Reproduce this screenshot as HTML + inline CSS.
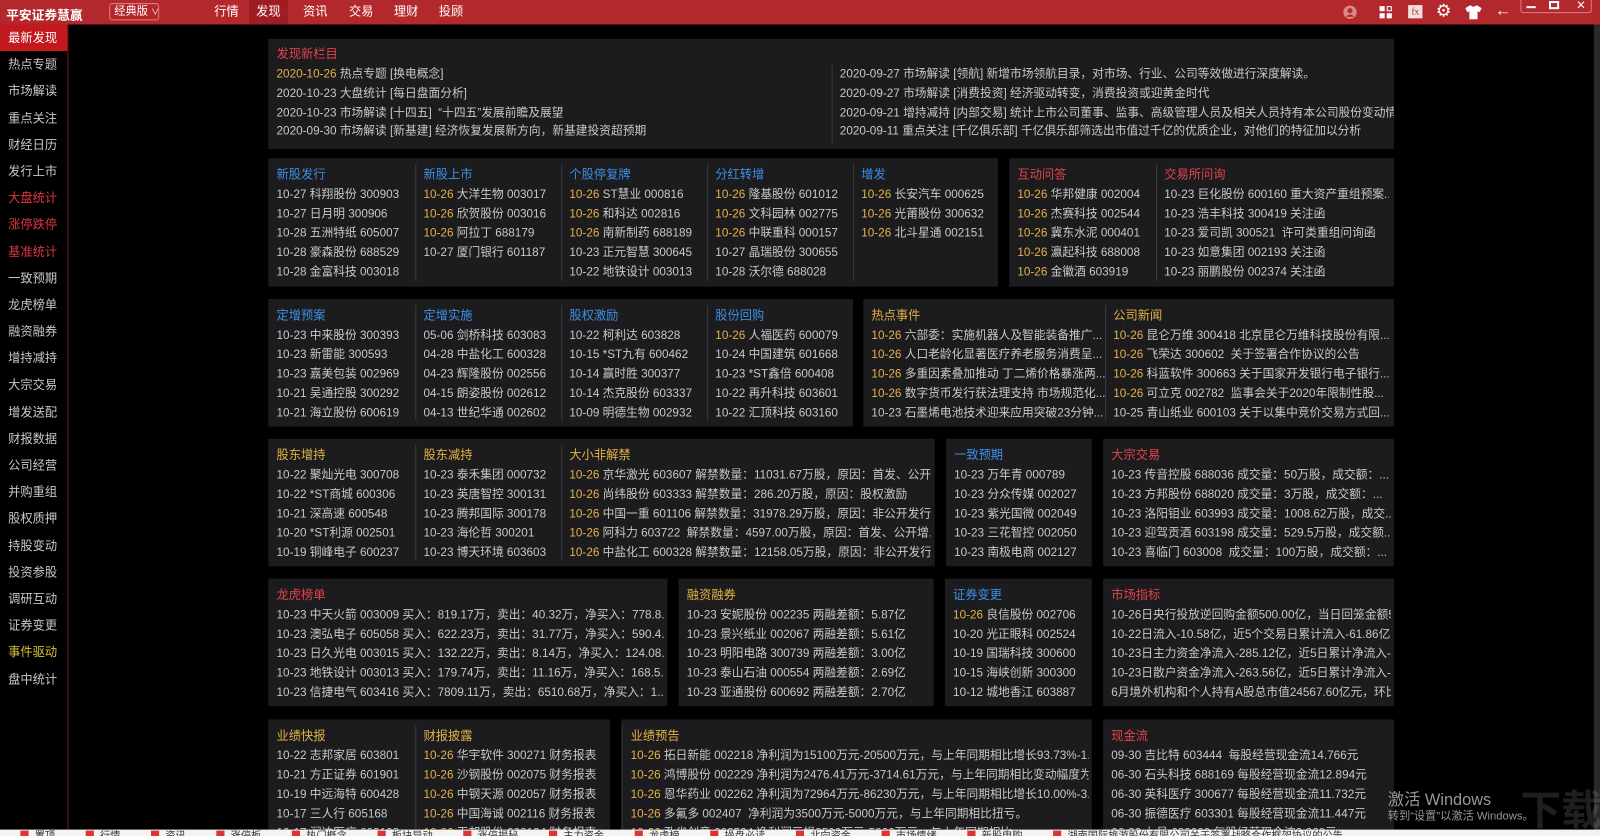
<!DOCTYPE html>
<html style="overflow:hidden;height:836px"><head><meta charset="utf-8"><style>
*{margin:0;padding:0;box-sizing:border-box}
body{width:1600px;height:836px;overflow:hidden;background:#000;font-family:"Liberation Sans","Noto Sans CJK SC",sans-serif;color:#c9c9c9;font-size:11.5px;position:relative}
#w{position:absolute;left:0;top:0;width:1568px;height:820px;transform:scale(1.0204);transform-origin:0 0;overflow:hidden}
#top{position:absolute;left:0;top:0;width:1568px;height:24px;background:#b3282d}
#logo{position:absolute;left:6px;top:4px;color:#fff;font-weight:bold;font-size:12.5px}
#ver{position:absolute;left:107px;top:3px;width:49px;height:17px;border:1px solid #e07a7d;border-radius:3px;color:#fff;font-size:11px;line-height:15px;padding-left:4px;white-space:nowrap}
.tab{position:absolute;top:0;height:24px;line-height:23px;color:#fff;font-size:12px;text-align:center;width:38px}
#side{position:absolute;left:0;top:24px;width:67px;height:790px;border-right:1px solid #7a1518}
.si{height:26.2px;line-height:26px;padding-left:8px;font-size:12px;color:#c8c8c8}
.p{position:absolute;background:#1c1c1f;overflow:hidden}
.c{position:absolute;top:6px;padding-left:8px;white-space:nowrap;overflow:hidden;line-height:19px}
.c.s{border-left:1px solid #3c3c3e;padding-left:7px}
.t{font-size:12px;line-height:22px;margin-top:-1px}
.b{color:#3d8fe4}.r{color:#e2434c}.g{color:#e0b245}
i{font-style:normal;color:#e5b24a}
#bot{position:absolute;left:0;top:813px;width:1568px;height:23px;background:#f3f3f3;font-size:10px;color:#333;white-space:nowrap;line-height:14px;padding-left:20px;overflow:hidden}
#bot span{margin-right:30px}
#bot span:before{content:"";display:inline-block;width:8px;height:8px;background:#d33;margin-right:6px}
</style></head><body><div id="w">
<div id="top">
<div id="logo">平安证券慧赢</div>
<div id="ver">经典版 <span style="font-size:8px">∨</span></div>
<div class="tab" style="left:203px">行情</div>
<div class="tab" style="left:244px;background:#9e1d22">发现</div>
<div class="tab" style="left:290px">资讯</div>
<div class="tab" style="left:335px">交易</div>
<div class="tab" style="left:379px">理财</div>
<div class="tab" style="left:423px">投顾</div>
<svg style="position:absolute;left:1316px;top:5px" width="14" height="14"><circle cx="7" cy="7" r="6.5" fill="#d88"/><circle cx="7" cy="5.5" r="2.5" fill="#b3282d"/><path d="M3 11.5Q7 7 11 11.5" fill="#b3282d"/></svg>
<svg style="position:absolute;left:1351px;top:5px" width="14" height="14" fill="#fff"><rect x="1" y="1" width="5" height="5"/><rect x="1" y="8" width="5" height="5"/><rect x="8" y="8" width="5" height="5"/><rect x="8.5" y="1.5" width="4" height="4" fill="none" stroke="#fff"/></svg>
<div style="position:absolute;left:1380px;top:5px;width:14px;height:13px;background:#f3e0e0;color:#b3282d;font-size:9px;line-height:13px;text-align:center;font-family:'Liberation Serif'">fx</div>
<div style="position:absolute;left:1407px;top:1px;color:#fff;font-size:17px">⚙</div>
<svg style="position:absolute;left:1436px;top:5px" width="16" height="14" fill="#fff"><path d="M5 0L0 3 2 7 4 6V14H12V6L14 7 16 3 11 0Q8 3 5 0Z"/></svg>
<div style="position:absolute;left:1465px;top:2px;color:#fff;font-size:16px">←</div>
<div style="position:absolute;left:1490px;top:-1px;width:70px;height:14px;border:1px solid #e08a8c;border-top:none;border-radius:0 0 3px 3px"></div>
<div style="position:absolute;left:1496px;top:6px;width:9px;height:2px;background:#fff"></div>
<div style="position:absolute;left:1518px;top:1px;width:10px;height:8px;border:2px solid #fff"></div>
<div style="position:absolute;left:1545px;top:-3px;color:#fff;font-size:15px">×</div>
</div>
<div id="side">
<div class="si" style="background:#c3181d;color:#fff">最新发现</div>
<div class="si">热点专题</div><div class="si">市场解读</div><div class="si">重点关注</div><div class="si">财经日历</div><div class="si">发行上市</div>
<div class="si" style="color:#e0383f">大盘统计</div><div class="si" style="color:#e0383f">涨停跌停</div><div class="si" style="color:#e0383f">基准统计</div>
<div class="si">一致预期</div><div class="si">龙虎榜单</div><div class="si">融资融券</div><div class="si">增持减持</div><div class="si">大宗交易</div><div class="si">增发送配</div><div class="si">财报数据</div><div class="si">公司经营</div><div class="si">并购重组</div><div class="si">股权质押</div><div class="si">持股变动</div><div class="si">投资参股</div><div class="si">调研互动</div><div class="si">证券变更</div>
<div class="si" style="color:#d8c03a">事件驱动</div><div class="si">盘中统计</div>
</div>
<div style="position:absolute;left:1562px;top:24px;width:6px;height:790px;background:#2a2a2a"></div>

<div class="p" style="left:263px;top:38px;width:1103px;height:108px">
<div class="c" style="left:0;top:5px;width:552px;line-height:18.8px"><div class="t r">发现新栏目</div><div><i>2020-10-26</i> 热点专题 [换电概念]</div><div>2020-10-23 大盘统计 [每日盘面分析]</div><div>2020-10-23 市场解读 [十四五] &nbsp;“十四五”发展前瞻及展望</div><div>2020-09-30 市场解读 [新基建] 经济恢复发展新方向，新基建投资超预期</div></div>
<div class="c s" style="left:552px;top:26px;width:551px;height:78px;line-height:18.8px"><div>2020-09-27 市场解读 [领航] 新增市场领航目录，对市场、行业、公司等效做进行深度解读。</div><div>2020-09-27 市场解读 [消费投资] 经济驱动转变，消费投资或迎黄金时代</div><div>2020-09-21 增持减持 [内部交易] 统计上市公司董事、监事、高级管理人员及相关人员持有本公司股份变动情况</div><div>2020-09-11 重点关注 [千亿俱乐部] 千亿俱乐部筛选出市值过千亿的优质企业，对他们的特征加以分析</div></div>
</div>

<div class="p" style="left:263px;top:155px;width:715px;height:126px">
<div class="c" style="left:0;width:144px"><div class="t b">新股发行</div><div>10-27 科翔股份 300903</div><div>10-27 日月明 300906</div><div>10-28 五洲特纸 605007</div><div>10-28 豪森股份 688529</div><div>10-28 金富科技 003018</div></div>
<div class="c s" style="left:144px;width:143px;height:114px"><div class="t b">新股上市</div><div><i>10-26</i> 大洋生物 003017</div><div><i>10-26</i> 欣贺股份 003016</div><div><i>10-26</i> 阿拉丁 688179</div><div>10-27 厦门银行 601187</div></div>
<div class="c s" style="left:287px;width:143px;height:114px"><div class="t b">个股停复牌</div><div><i>10-26</i> ST慧业 000816</div><div><i>10-26</i> 和科达 002816</div><div><i>10-26</i> 南新制药 688189</div><div>10-23 正元智慧 300645</div><div>10-22 地铁设计 003013</div></div>
<div class="c s" style="left:430px;width:143px;height:114px"><div class="t b">分红转增</div><div><i>10-26</i> 隆基股份 601012</div><div><i>10-26</i> 文科园林 002775</div><div><i>10-26</i> 中联重科 000157</div><div>10-27 晶瑞股份 300655</div><div>10-28 沃尔德 688028</div></div>
<div class="c s" style="left:573px;width:142px;height:114px"><div class="t b">增发</div><div><i>10-26</i> 长安汽车 000625</div><div><i>10-26</i> 光莆股份 300632</div><div><i>10-26</i> 北斗星通 002151</div></div>
</div>
<div class="p" style="left:989px;top:155px;width:377px;height:126px">
<div class="c" style="left:0;width:144px"><div class="t r">互动问答</div><div><i>10-26</i> 华邦健康 002004</div><div><i>10-26</i> 杰赛科技 002544</div><div><i>10-26</i> 冀东水泥 000401</div><div><i>10-26</i> 瀛起科技 688008</div><div><i>10-26</i> 金徽酒 603919</div></div>
<div class="c s" style="left:144px;width:228px;height:114px"><div class="t r">交易所问询</div><div>10-23 巨化股份 600160 重大资产重组预案..</div><div>10-23 浩丰科技 300419 关注函</div><div>10-23 爱司凯 300521 &nbsp;许可类重组问询函</div><div>10-23 如意集团 002193 关注函</div><div>10-23 丽鹏股份 002374 关注函</div></div>
</div>

<div class="p" style="left:263px;top:293px;width:573px;height:125px">
<div class="c" style="left:0;width:144px"><div class="t b">定增预案</div><div>10-23 中来股份 300393</div><div>10-23 新雷能 300593</div><div>10-23 嘉美包装 002969</div><div>10-21 吴通控股 300292</div><div>10-21 海立股份 600619</div></div>
<div class="c s" style="left:144px;width:143px;height:113px"><div class="t b">定增实施</div><div>05-06 剑桥科技 603083</div><div>04-28 中盐化工 600328</div><div>04-23 辉隆股份 002556</div><div>04-15 朗姿股份 002612</div><div>04-13 世纪华通 002602</div></div>
<div class="c s" style="left:287px;width:143px;height:113px"><div class="t b">股权激励</div><div>10-22 柯利达 603828</div><div>10-15 *ST九有 600462</div><div>10-14 赢时胜 300377</div><div>10-14 杰克股份 603337</div><div>10-09 明德生物 002932</div></div>
<div class="c s" style="left:430px;width:143px;height:113px"><div class="t b">股份回购</div><div><i>10-26</i> 人福医药 600079</div><div>10-24 中国建筑 601668</div><div>10-23 *ST鑫倍 600408</div><div>10-22 再升科技 603601</div><div>10-22 汇顶科技 603160</div></div>
</div>
<div class="p" style="left:846px;top:293px;width:520px;height:125px">
<div class="c" style="left:0;width:237px"><div class="t g">热点事件</div><div><i>10-26</i> 六部委：实施机器人及智能装备推广...</div><div><i>10-26</i> 人口老龄化显著医疗养老服务消费呈...</div><div><i>10-26</i> 多重因素叠加推动 丁二烯价格暴涨两...</div><div><i>10-26</i> 数字货币发行获法理支持 市场规范化...</div><div>10-23 石墨烯电池技术迎来应用突破23分钟...</div></div>
<div class="c s" style="left:237px;width:278px;height:113px"><div class="t g">公司新闻</div><div><i>10-26</i> 昆仑万维 300418 北京昆仑万维科技股份有限...</div><div><i>10-26</i> 飞荣达 300602 &nbsp;关于签署合作协议的公告</div><div><i>10-26</i> 科蓝软件 300663 关于国家开发银行电子银行...</div><div><i>10-26</i> 可立克 002782 &nbsp;监事会关于2020年限制性股...</div><div>10-25 青山纸业 600103 关于以集中竞价交易方式回...</div></div>
</div>

<div class="p" style="left:263px;top:430px;width:653px;height:125px">
<div class="c" style="left:0;width:144px"><div class="t g">股东增持</div><div>10-22 聚灿光电 300708</div><div>10-22 *ST商城 600306</div><div>10-21 深高速 600548</div><div>10-20 *ST利源 002501</div><div>10-19 铜峰电子 600237</div></div>
<div class="c s" style="left:144px;width:143px;height:113px"><div class="t g">股东减持</div><div>10-23 泰禾集团 000732</div><div>10-23 英唐智控 300131</div><div>10-23 腾邦国际 300178</div><div>10-23 海伦哲 300201</div><div>10-23 博天环境 603603</div></div>
<div class="c s" style="left:287px;width:362px;height:113px"><div class="t g">大小非解禁</div><div><i>10-26</i> 京华激光 603607 解禁数量：11031.67万股，原因：首发、公开...</div><div><i>10-26</i> 尚纬股份 603333 解禁数量：286.20万股，原因：股权激励</div><div><i>10-26</i> 中国一重 601106 解禁数量：31978.29万股，原因：非公开发行...</div><div><i>10-26</i> 阿科力 603722 &nbsp;解禁数量：4597.00万股，原因：首发、公开增...</div><div><i>10-26</i> 中盐化工 600328 解禁数量：12158.05万股，原因：非公开发行...</div></div>
</div>
<div class="p" style="left:927px;top:430px;width:143px;height:125px">
<div class="c" style="left:0;width:143px"><div class="t b">一致预期</div><div>10-23 万年青 000789</div><div>10-23 分众传媒 002027</div><div>10-23 紫光国微 002049</div><div>10-23 三花智控 002050</div><div>10-23 南极电商 002127</div></div>
</div>
<div class="p" style="left:1081px;top:430px;width:285px;height:125px">
<div class="c" style="left:0;width:282px"><div class="t r">大宗交易</div><div>10-23 传音控股 688036 成交量：50万股，成交额：...</div><div>10-23 方邦股份 688020 成交量：3万股，成交额：...</div><div>10-23 洛阳钼业 603993 成交量：1008.62万股，成交...</div><div>10-23 迎驾贡酒 603198 成交量：529.5万股，成交额...</div><div>10-23 喜临门 603008 &nbsp;成交量：100万股，成交额：...</div></div>
</div>

<div class="p" style="left:263px;top:567px;width:391px;height:125px">
<div class="c" style="left:0;width:388px"><div class="t r">龙虎榜单</div><div>10-23 中天火箭 003009 买入：819.17万，卖出：40.32万，净买入：778.8...</div><div>10-23 澳弘电子 605058 买入：622.23万，卖出：31.77万，净买入：590.4...</div><div>10-23 日久光电 003015 买入：132.22万，卖出：8.14万，净买入：124.08...</div><div>10-23 地铁设计 003013 买入：179.74万，卖出：11.16万，净买入：168.5...</div><div>10-23 信捷电气 603416 买入：7809.11万，卖出：6510.68万，净买入：1...</div></div>
</div>
<div class="p" style="left:665px;top:567px;width:250px;height:125px">
<div class="c" style="left:0;width:246px"><div class="t g">融资融券</div><div>10-23 安妮股份 002235 两融差额：5.87亿</div><div>10-23 景兴纸业 002067 两融差额：5.61亿</div><div>10-23 明阳电路 300739 两融差额：3.00亿</div><div>10-23 泰山石油 000554 两融差额：2.69亿</div><div>10-23 亚通股份 600692 两融差额：2.70亿</div></div>
</div>
<div class="p" style="left:926px;top:567px;width:144px;height:125px">
<div class="c" style="left:0;width:144px"><div class="t b">证券变更</div><div><i>10-26</i> 良信股份 002706</div><div>10-20 光正眼科 002524</div><div>10-19 国瑞科技 300600</div><div>10-15 海峡创新 300300</div><div>10-12 城地香江 603887</div></div>
</div>
<div class="p" style="left:1081px;top:567px;width:285px;height:125px">
<div class="c" style="left:0;width:282px"><div class="t r">市场指标</div><div>10-26日央行投放逆回购金额500.00亿，当日回笼金额5...</div><div>10-22日流入-10.58亿，近5个交易日累计流入-61.86亿</div><div>10-23日主力资金净流入-285.12亿，近5日累计净流入-...</div><div>10-23日散户资金净流入-263.56亿，近5日累计净流入-...</div><div>6月境外机构和个人持有A股总市值24567.60亿元，环比...</div></div>
</div>

<div class="p" style="left:263px;top:705px;width:335px;height:108px">
<div class="c" style="left:0;width:144px"><div class="t g">业绩快报</div><div>10-22 志邦家居 603801</div><div>10-21 方正证券 601901</div><div>10-19 中远海特 600428</div><div>10-17 三人行 605168</div><div>10-17 润达医疗 603108</div></div>
<div class="c s" style="left:144px;width:191px;height:110px"><div class="t g">财报披露</div><div><i>10-26</i> 华宇软件 300271 财务报表</div><div><i>10-26</i> 沙钢股份 002075 财务报表</div><div><i>10-26</i> 中钢天源 002057 财务报表</div><div><i>10-26</i> 中国海诚 002116 财务报表</div><div><i>10-26</i> 天邦股份 002124 财务报表</div></div>
</div>
<div class="p" style="left:609px;top:705px;width:461px;height:108px">
<div class="c s" style="left:0;width:458px;height:110px;padding-left:8px"><div class="t g">业绩预告</div><div><i>10-26</i> 拓日新能 002218 净利润为15100万元-20500万元，与上年同期相比增长93.73%-1...</div><div><i>10-26</i> 鸿博股份 002229 净利润为2476.41万元-3714.61万元，与上年同期相比变动幅度为...</div><div><i>10-26</i> 恩华药业 002262 净利润为72964万元-86230万元，与上年同期相比增长10.00%-3...</div><div><i>10-26</i> 多氟多 002407 &nbsp;净利润为3500万元-5000万元，与上年同期相比扭亏。</div><div><i>10-26</i> 孔雀创意 002594 净利润亏损3500万元-5000万元，与上年同期相比</div></div>
</div>
<div class="p" style="left:1081px;top:705px;width:285px;height:108px">
<div class="c" style="left:0;width:282px"><div class="t r">现金流</div><div>09-30 吉比特 603444 &nbsp;每股经营现金流14.766元</div><div>06-30 石头科技 688169 每股经营现金流12.894元</div><div>06-30 英科医疗 300677 每股经营现金流11.732元</div><div>06-30 振德医疗 603301 每股经营现金流11.447元</div><div>06-30 九号 689009 每股经营现金流9.360元</div></div>
</div>

<div style="position:absolute;left:1360px;top:770px;color:rgba(200,200,200,.75);font-size:16px">激活 Windows</div>
<div style="position:absolute;left:1360px;top:791px;color:rgba(200,200,200,.75);font-size:11px">转到“设置”以激活 Windows。</div>
<div style="position:absolute;left:1490px;top:762px;color:rgba(255,255,255,.12);font-size:40px;font-weight:bold;white-space:nowrap">下载吧</div>

<div id="bot"><span>置顶</span><span>行情</span><span>资讯</span><span>涨停板</span><span>热门概念</span><span>板块异动</span><span>涨停揭秘</span><span>主力资金</span><span>龙虎榜</span><span>操盘必读</span><span>北向资金</span><span>市场情绪</span><span>新股申购</span><span>湖南国际旅游股份有限公司关于签署战略合作框架协议的公告</span></div>
</div></body></html>
